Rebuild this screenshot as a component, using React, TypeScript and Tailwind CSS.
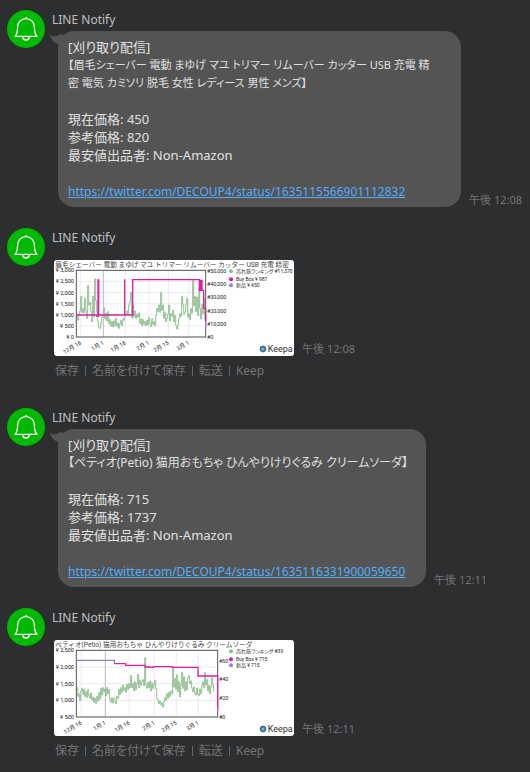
import React from "react";
import clsx from "clsx";

const GREEN_1 = [
  185, 195, 176, 168, 124, 172, 160, 174, 130, 166, 190, 92, 150, 142, 168, 200, 124, 185, 72, 138, 172, 200, 218, 220,
  205, 186, 178, 158, 192, 174, 198, 170, 206, 194, 214, 200, 216, 198, 212, 190, 214, 204, 220, 206, 196, 212, 192, 196,
  182, 176, 168, 178, 150, 140, 112, 190, 152, 186, 168, 190, 178, 186, 174, 206, 192, 212, 194, 208, 200, 212, 196, 210,
  188, 206, 214, 192, 208, 200, 212, 180, 160, 170, 150, 172, 112, 166, 150, 190, 172, 200, 190, 176, 150, 198, 176, 184,
  166, 200, 182, 212, 222, 210, 190, 176, 184, 124, 150, 176, 172, 148, 130, 186, 176, 194, 160, 174, 75, 152, 124, 170,
  126, 182, 104, 160, 192, 148, 176, 132, 194,
];

const GREEN_2 = [
  158, 184, 176, 196, 168, 160, 178, 162, 184, 170, 188, 164, 182, 190, 174, 196, 186, 202, 190, 206, 184, 198, 172, 192,
  160, 180, 158, 170, 162, 182, 158, 176, 164, 192, 202, 188, 204, 190, 198, 206, 184, 190, 164, 178, 158, 172, 150, 166,
  158, 172, 148, 164, 146, 158, 122, 158, 144, 168, 140, 164, 146, 118, 158, 136, 150, 140, 134, 152, 68, 150, 160, 142,
  158, 138, 168, 144, 160, 150, 136, 162, 190, 196, 206, 198, 210, 204, 216, 200, 188, 196, 176, 190, 172, 184, 168, 176,
  96, 156, 130, 162, 120, 170, 140, 186, 150, 112, 160, 126, 168, 140, 164, 128, 122, 146, 138, 160, 170, 156, 174, 180,
  160, 178, 182, 162, 176, 150, 140, 158, 112, 150, 134, 168, 150, 176, 154, 128, 150, 170,
];

const steps = (ys: number[]) => "M80 " + ys[0] + ys.map((y, i) => `H${80 + i * 3}V${y}`).join("");

const CHARTS = {
  shaver: {
    title: "眉毛シェーバー 電動 まゆげ マユ トリマー リムーバー カッター USB 充電 精密",
    right: 467,
    green: steps(GREEN_1),
    left: ["¥ 3,000", "¥ 2,500", "¥ 2,000", "¥ 1,500", "¥ 1,000", "¥ 500", "¥ 0"],
    rank: [
      { y: 47, label: "#50,000" },
      { y: 87, label: "#40,000" },
      { y: 127, label: "#30,000" },
      { y: 167, label: "#20,000" },
      { y: 207, label: "#10,000" },
      { y: 246, label: "#0" },
    ],
    dates: [92, 160, 226, 296, 355, 416],
    magenta: "M80 180H140V186M144 180V73M146 186V73M144 180H224V73V180H248V74H448V106H456V74M450 74V106M453 74V106M456 106H461V160H467V200",
    blue: "M467 200V216",
    legend: ["売れ筋ランキング #11,370", "Buy Box ¥ 987", "新品 ¥ 450"],
  },
  toy: {
    title: "ペティオ(Petio) 猫用おもちゃ ひんやりけりぐるみ クリームソーダ",
    right: 503,
    green: steps(GREEN_2),
    left: ["¥ 2,500", "¥ 2,000", "¥ 1,500", "¥ 1,000", "¥ 500"],
    rank: [
      { y: 78, label: "#60" },
      { y: 133, label: "#40" },
      { y: 189, label: "#20" },
      { y: 246, label: "#0" },
    ],
    dates: [94, 166, 238, 313, 379, 445],
    magenta: "M193 86H227V91H285V96H300V97H310V95H366V97H444V123H503V224",
    blue: "M80 76H193V86M503 218V228",
    legend: ["売れ筋ランキング #39", "Buy Box ¥ 715", "新品 ¥ 715"],
  },
};

const DATE_LABELS = ["12月 16", "1月 1", "1月 16", "2月 1", "2月 15", "3月 1"];
const LEGEND_COLORS = ["#8fbc8f", "#e010a8", "#8888dd"];

type Chart = (typeof CHARTS)["shaver"];

const PriceChart = ({ chart }: { chart: Chart }) => {
  const gap = 200 / (chart.left.length - 1);
  return (
    <svg
      viewBox="12 15 720 288"
      role="img"
      aria-label={chart.title}
      className="h-24 w-60 shrink-0 rounded-[3px] bg-white font-['Roboto','Noto_Sans_CJK_JP',sans-serif] [font-feature-settings:normal]"
    >
      <text x="16" y="35" fill="#444" fontSize="20">
        {chart.title}
      </text>
      {chart.left.map((label, i) => (
        <g key={label}>
          <path d={`M78 ${46 + i * gap}H${chart.right}`} stroke="#e4e4e4" strokeWidth="2" />
          <text x="72" y={52 + i * gap} textAnchor="end" fill="#222" fontSize="17">
            {label}
          </text>
        </g>
      ))}
      {chart.dates.map((x, i) => (
        <g key={x}>
          <path d={`M${x} 46V246`} stroke={i === 1 ? "#999" : "#e4e4e4"} strokeWidth="2" />
          <text transform={`translate(${x + 3} 267) rotate(-30)`} textAnchor="end" fill="#222" fontSize="17">
            {DATE_LABELS[i]}
          </text>
        </g>
      ))}
      {chart.rank.map(({ y, label }) => (
        <text key={label} x={chart.right + 4} y={y + 6} fill="#222" fontSize="16">
          {label}
        </text>
      ))}
      <path d={chart.green} fill="none" stroke="#93bf93" strokeWidth="3" />
      <rect x="79" y="46" width={chart.right - 79} height="200" fill="none" stroke="#555" strokeWidth="3" />
      <path d={chart.magenta} fill="none" stroke="#dc1ca6" strokeWidth="4" />
      <path d={chart.blue} fill="none" stroke="#8c80c8" strokeWidth="4" />
      {chart.legend.map((label, i) => (
        <g key={label}>
          <circle cx="543" cy={[49, 73, 91][i]} r="6" fill={LEGEND_COLORS[i]} />
          <text x="558" y={[54, 79, 96][i]} fill="#222" fontSize="15" className="[font-feature-settings:'palt']">
            {label}
          </text>
        </g>
      ))}
      <circle cx="639" cy="282" r="7" fill="none" stroke="#2e6c98" strokeWidth="5" />
      <path d="M639 272V292M629 282H649" stroke="#2e6c98" strokeWidth="2" />
      <text x="653" y="291" fill="#333" fontSize="27">
        Keepa
      </text>
    </svg>
  );
};

const BellAvatar = () => (
  <div className="flex size-[38px] shrink-0 items-center justify-center rounded-full bg-[#00b900]">
    <svg viewBox="0 0 24 26" fill="none" stroke="white" strokeWidth="1.3" className="h-[26px] w-6">
      <path d="M12 2.6V1M1 20.4C3.4 18 3.6 16 3.6 11C3.6 6 7.2 2.6 12 2.6C16.8 2.6 20.4 6 20.4 11C20.4 16 20.6 18 23 20.4Z" strokeLinejoin="round" />
      <path d="M8.6 21C9 23 10.3 24 12 24C13.7 24 15 23 15.4 21" />
    </svg>
  </div>
);

const Message = ({ children }: { children: React.ReactNode }) => (
  <article className="flex gap-[7px] pl-[7px]">
    <BellAvatar />
    <div className="min-w-0">
      <h2 className="text-[12px] leading-5 text-[#c0c0c0]">LINE Notify</h2>
      {children}
    </div>
  </article>
);

const Time = ({ value }: { value: string }) => (
  <time className="shrink-0 text-[11px] leading-[14px] text-[#747474]">午後 {value}</time>
);

type TextMessageProps = {
  title: React.ReactNode;
  price: number;
  listPrice: number;
  url: string;
  time: string;
  wide?: boolean;
};

const TextMessage = ({ title, price, listPrice, url, time, wide }: TextMessageProps) => (
  <Message>
    <div className="mt-px flex items-end gap-2 pl-1.5">
      <div
        className={clsx(
          "relative rounded-[16px] bg-[#545454] py-[7px] pr-[18px] pl-2.5 text-[13px] leading-[18px] whitespace-nowrap text-[#e0e0e0]",
          wide && "w-[403px]"
        )}
      >
        <svg viewBox="0 0 14 14" className="absolute top-0 -left-2 size-3.5" fill="#545454">
          <path d="M0 4C3 6 7 6 10 3L14 4V13H8C4 12 1 8 0 4Z" />
        </svg>
        <p>[刈り取り配信]</p>
        <p className={clsx("leading-[18px]", wide ? "text-[11px]" : "text-[12px]")}>{title}</p>
        <p className="mt-[18px]">現在価格: {price}</p>
        <p>参考価格: {listPrice}</p>
        <p>最安値出品者: Non-Amazon</p>
        <p className="mt-[18px]">
          <a href={url} className="text-[12px] leading-none text-[#55adfa] underline">
            {url}
          </a>
        </p>
      </div>
      <Time value={time} />
    </div>
  </Message>
);

const ACTIONS = ["保存", "名前を付けて保存", "転送", "Keep"];

const ChartMessage = ({ chart, time }: { chart: Chart; time: string }) => (
  <Message>
    <div className="mt-3 flex items-end gap-2 pl-0.5">
      <PriceChart chart={chart} />
      <Time value={time} />
    </div>
    <div className="mt-[5px] flex items-center pl-[3px] text-[12px] leading-5 text-[#747474]">
      {ACTIONS.map((action, i) => (
        <React.Fragment key={action}>
          {i > 0 && <span className="mx-1.5 h-2.5 w-px bg-[#666]" />}
          <button type="button">{action}</button>
        </React.Fragment>
      ))}
    </div>
  </Message>
);

export default function App() {
  return (
    <main className="min-h-screen overflow-hidden bg-[#2d2e30] pt-2.5 font-['Noto_Sans','Noto_Sans_CJK_JP',sans-serif] [font-feature-settings:'palt']">
      <div className="flex flex-col gap-[27px]">
        <section className="flex flex-col gap-[21px]">
          <TextMessage
            wide
            title={
              <>
                【眉毛シェーバー 電動 まゆげ マユ トリマー リムーバー カッター USB 充電 精
                <br />
                密 電気 カミソリ 脱毛 女性 レディース 男性 メンズ】
              </>
            }
            price={450}
            listPrice={820}
            url="https://twitter.com/DECOUP4/status/1635115566901112832"
            time="12:08"
          />
          <ChartMessage chart={CHARTS.shaver} time="12:08" />
        </section>
        <section className="flex flex-col gap-[21px]">
          <TextMessage
            title="【ペティオ(Petio) 猫用おもちゃ ひんやりけりぐるみ クリームソーダ】"
            price={715}
            listPrice={1737}
            url="https://twitter.com/DECOUP4/status/1635116331900059650"
            time="12:11"
          />
          <ChartMessage chart={CHARTS.toy} time="12:11" />
        </section>
      </div>
    </main>
  );
}
